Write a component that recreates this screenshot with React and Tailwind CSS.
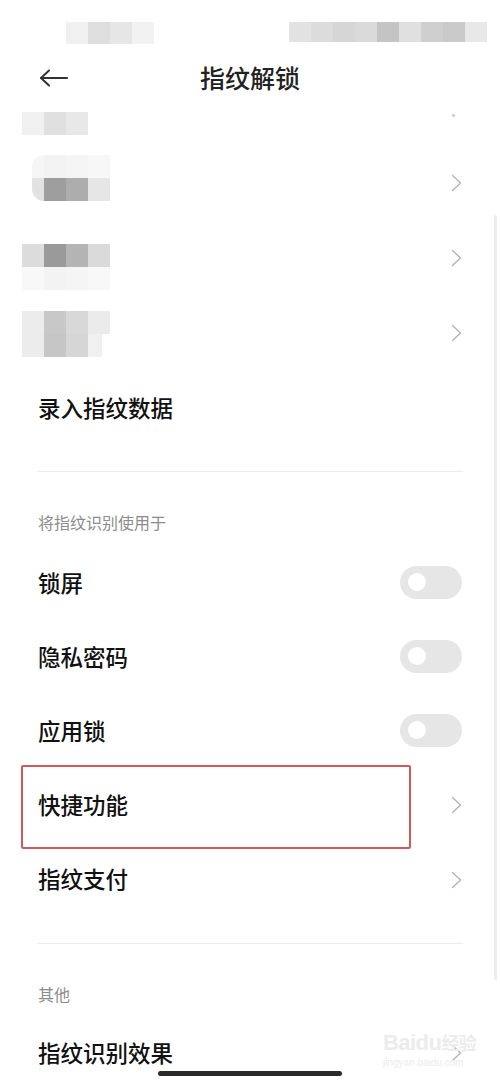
import React from "react";

const font = { fontFamily: '"Noto Sans CJK SC", "Noto Sans", sans-serif' };

function Chevron() {
  return (
    <svg width="11" height="18" viewBox="0 0 11 18" className="shrink-0">
      <polyline points="1.5,1.5 9.5,9 1.5,16.5" fill="none" stroke="#b4b4b4" strokeWidth="1.4" strokeLinecap="round" strokeLinejoin="round" />
    </svg>
  );
}

function Toggle() {
  return (
    <div className="w-[62px] h-[33px] rounded-full bg-[#e6e6e6] flex items-center pl-[8px] shrink-0 mt-[-2px]">
      <div className="w-[18px] h-[18px] rounded-full bg-white" />
    </div>
  );
}

function Cells({ rows }) {
  return (
    <div className="flex flex-col">
      {rows.map((r, i) => (
        <div key={i} className="flex">
          {r.map((c, j) => (
            <div key={j} className="h-[23px]" style={{ width: c[1], background: c[0] }} />
          ))}
        </div>
      ))}
    </div>
  );
}

function TextRow({ label, right, h = "h-[74px]", children }) {
  return (
    <div className={`relative ${h} flex items-center justify-between pl-[38px] pr-[38px]`}>
      <span className="text-[22.5px] leading-[28px] font-medium text-[#111] mt-[-3px]">{label}</span>
      {right}
      {children}
    </div>
  );
}

export default function App() {
  return (
    <div className="relative w-[500px] h-[1084px] bg-white overflow-hidden" style={font}>
      {/* status bar */}
      <div className="h-[55px] relative">
        <div className="absolute left-[66px] top-[22px] flex">
          <div className="w-[22px] h-[22px] bg-[#f0f0f0]" />
          <div className="w-[22px] h-[22px] bg-[#dedede]" />
          <div className="w-[22px] h-[22px] bg-[#e6e6e6]" />
          <div className="w-[22px] h-[22px] bg-[#f2f2f2]" />
        </div>
        <div className="absolute left-[289px] top-[22px] flex">
          {["#e2e2e2", "#dcdcdc", "#d6d6d6", "#dadada", "#c4c4c4", "#e0e0e0", "#cfcfcf", "#cacaca", "#e8e8e8"].map((c, i) => (
            <div key={i} className="w-[22px] h-[20px]" style={{ background: c }} />
          ))}
        </div>
      </div>

      {/* header */}
      <div className="h-[45px] relative flex items-center justify-center">
        <svg width="30" height="18" viewBox="0 0 30 18" className="absolute left-[39px] top-[14px]">
          <line x1="2" y1="9" x2="28" y2="9" stroke="#333" strokeWidth="2" strokeLinecap="round" />
          <polyline points="10,1.5 2,9 10,16.5" fill="none" stroke="#333" strokeWidth="2" strokeLinecap="round" strokeLinejoin="round" />
        </svg>
        <span className="text-[25px] leading-[32px] font-medium text-[#222] mt-[-2px]">指纹解锁</span>
      </div>

      {/* partial row */}
      <div className="h-[46px] relative">
        <div className="absolute left-[22px] top-[12px]">
          <Cells rows={[[["#f0f0f0", 22], ["#e0e0e0", 22], ["#e8e8e8", 22]]]} />
        </div>
        <div className="absolute left-[452px] top-[14px] w-[3px] h-[3px] bg-[#cfcfcf] rotate-45" />
      </div>

      {/* blurred rows */}
      <div className="h-[74px] relative flex items-center justify-end pr-[38px]">
        <div className="absolute left-[32px] top-[9px] rounded-l-[12px] overflow-hidden">
          <Cells
            rows={[
              [["#f6f6f6", 12], ["#f3f3f3", 22], ["#f5f5f5", 22], ["#f7f7f7", 22]],
              [["#e2e2e2", 12], ["#9e9e9e", 22], ["#adadad", 22], ["#e6e6e6", 22]],
            ]}
          />
        </div>
        <Chevron />
      </div>
      <div className="h-[75px] relative flex items-center justify-end pr-[38px]">
        <div className="absolute left-[22px] top-[24px]">
          <Cells
            rows={[
              [["#dcdcdc", 22], ["#9a9a9a", 22], ["#b4b4b4", 22], ["#dadada", 22]],
              [["#f8f8f8", 22], ["#f3f3f3", 22], ["#f5f5f5", 22], ["#f8f8f8", 22]],
            ]}
          />
        </div>
        <Chevron />
      </div>
      <div className="h-[75px] relative flex items-center justify-end pr-[38px]">
        <div className="absolute left-[22px] top-[16px]">
          <Cells
            rows={[
              [["#ececec", 22], ["#c8c8c8", 22], ["#d8d8d8", 22], ["#ebebeb", 22]],
              [["#ececec", 22], ["#c6c6c6", 22], ["#d6d6d6", 22], ["#f0f0f0", 14]],
            ]}
          />
        </div>
        <Chevron />
      </div>

      <TextRow label="录入指纹数据" h="h-[76px]" />
      <div className="h-[25px]" />
      <div className="mx-[37px] h-px bg-[#ececec]" />

      <div className="pt-[40px] pb-[14px] pl-[38px]">
        <div className="text-[16px] leading-[20px] text-[#8c8c8c]">将指纹识别使用于</div>
      </div>

      <TextRow label="锁屏" right={<Toggle />} />
      <TextRow label="隐私密码" right={<Toggle />} />
      <TextRow label="应用锁" right={<Toggle />} />
      <TextRow label="快捷功能" right={<Chevron />}>
        <div className="absolute left-[21px] top-[-3px] w-[390px] h-[84px] border-2 border-[#d4585a] rounded-[2px]" />
      </TextRow>
      <TextRow label="指纹支付" right={<Chevron />} h="h-[75px]" />

      <div className="h-[26px]" />
      <div className="mx-[37px] h-px bg-[#ececec]" />

      <div className="pt-[40px] pb-[12px] pl-[38px]">
        <div className="text-[16px] leading-[20px] text-[#8c8c8c]">其他</div>
      </div>

      <TextRow label="指纹识别效果" right={<Chevron />} />

      {/* watermark */}
      <div className="absolute left-[383px] top-[1032px] flex flex-col items-start leading-none text-[#ececec]">
        <span className="text-[22px] font-bold tracking-tight" style={{ fontFamily: '"Liberation Sans", sans-serif' }}>
          Baidu<span className="text-[18px]" style={font}>经验</span>
        </span>
        <span className="text-[10px] mt-[4px]" style={{ fontFamily: '"Liberation Sans", sans-serif' }}>jingyan.baidu.com</span>
      </div>

      {/* scrollbar */}
      <div className="absolute left-[494px] top-[215px] w-[3px] h-[765px] bg-[#ededed] rounded-full" />

      {/* home indicator */}
      <div className="absolute left-[158px] top-[1071px] w-[184px] h-[5px] rounded-full bg-[#2a2a2a]" />
    </div>
  );
}
